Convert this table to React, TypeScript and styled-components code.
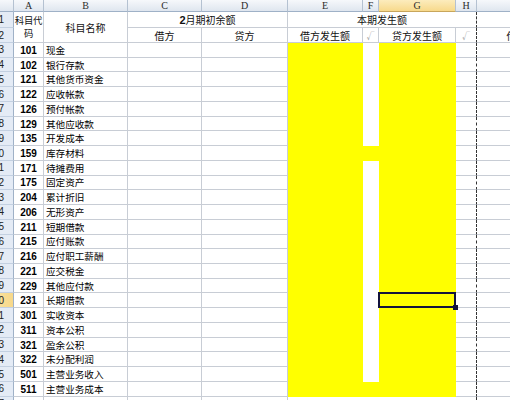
import React from "react";
import styled, { createGlobalStyle, css } from "styled-components";

const Global = createGlobalStyle`
  html, body { margin: 0; padding: 0; background: #fff; overflow: hidden; }
  body { width: 510px; height: 400px; font-family: "Liberation Sans", "Noto Sans CJK SC", sans-serif; }
  * { box-sizing: border-box; }
`;

const COLS = "28px 30px 84px 74px 86px 75px 16px 77px 21px 80px";
const GRID = "#c8cdd5";
const YELLOW = "#ffff00";
const CJK = `"Noto Sans CJK SC", "Liberation Sans", sans-serif`;

const Sheet = styled.div`
  margin-left: -14px;
  width: 524px;
  height: 400px;
  overflow: hidden;
`;

const ColHeadRow = styled.div`
  display: grid;
  grid-template-columns: ${COLS};
  height: 12px;
`;

const ColHead = styled.div<{ $active?: boolean }>`
  background: linear-gradient(#f6f8fb, #dfe6ef);
  border-right: 1px solid #b4c1d1;
  border-bottom: 1px solid #9fb1c7;
  font: 10px "Liberation Serif", serif;
  line-height: 11px;
  color: #2b2b2b;
  text-align: center;
  ${(p) =>
    p.$active &&
    css`
      background: linear-gradient(#fcecbd, #f7d98b);
      border-bottom-color: #c8a65c;
    `}
`;

const HeadGrid = styled.div`
  display: grid;
  grid-template-columns: ${COLS};
  grid-template-rows: 16px 15px;
`;

const RowHead = styled.div<{ $active?: boolean; $r?: string }>`
  ${(p) => p.$r && css`grid-column: 1; grid-row: ${p.$r};`}
  background: ${(p) => (p.$active ? "linear-gradient(90deg,#fbe6a6,#f7d88a)" : "#e4ebf5")};
  border-right: 1px solid #9fb1c7;
  border-bottom: 1px solid #c3d0e1;
  font: 10px "Liberation Sans", sans-serif;
  color: #222;
  padding-right: 9px;
  display: flex;
  align-items: center;
  justify-content: flex-end;
  overflow: hidden;
  white-space: nowrap;
`;

const HCell = styled.div<{ $c: string; $r: string; $dashed?: boolean }>`
  grid-column: ${(p) => p.$c};
  grid-row: ${(p) => p.$r};
  border-right: 1px ${(p) => (p.$dashed ? "dashed #333" : `solid ${GRID}`)};
  border-bottom: 1px solid ${GRID};
  display: flex;
  align-items: center;
  justify-content: center;
  font-family: ${CJK};
  font-size: 10px;
  line-height: 11px;
  color: #111;
  white-space: nowrap;
  overflow: hidden;
  text-align: center;
`;

const Stack = styled.span`
  display: flex;
  flex-direction: column;
  align-items: center;
  font-size: 9.4px;
  line-height: 13px;
  letter-spacing: -0.2px;
`;

const Bold2 = styled.b`
  font: bold 11px "Liberation Sans", sans-serif;
`;

const Check = styled.span`
  color: #9a9a9a;
  font-size: 8px;
`;

const DataRow = styled.div`
  display: grid;
  grid-template-columns: ${COLS};
  height: 14.74px;
`;

const Cell = styled.div<{ $dashed?: boolean }>`
  border-right: 1px ${(p) => (p.$dashed ? "dashed #333" : `solid ${GRID}`)};
  border-bottom: 1px solid ${GRID};
  overflow: hidden;
  white-space: nowrap;
`;

const Code = styled(Cell)`
  font: bold 10px "Liberation Sans", sans-serif;
  color: #000;
  display: flex;
  align-items: center;
  justify-content: center;
  padding-top: 1px;
`;

const Name = styled(Cell)`
  font-family: ${CJK};
  font-size: 9.6px;
  color: #000;
  display: flex;
  align-items: center;
  padding-left: 2px;
`;

const Fill = styled.div<{ $color: string; $selected?: boolean }>`
  background: ${(p) => p.$color};
  position: relative;
  ${(p) =>
    p.$selected &&
    css`
      &::after {
        content: "";
        position: absolute;
        left: -1px;
        top: -1px;
        right: 0;
        bottom: 0;
        border: 2px solid #14143c;
      }
      &::before {
        content: "";
        position: absolute;
        right: -2px;
        bottom: -2px;
        width: 5px;
        height: 5px;
        background: #14143c;
        z-index: 2;
      }
    `}
`;

const rows: [number, string, string][] = [
  [3, "101", "现金"],
  [4, "102", "银行存款"],
  [5, "121", "其他货币资金"],
  [6, "122", "应收帐款"],
  [7, "126", "预付帐款"],
  [8, "129", "其他应收款"],
  [9, "135", "开发成本"],
  [10, "159", "库存材料"],
  [11, "171", "待摊费用"],
  [12, "175", "固定资产"],
  [13, "204", "累计折旧"],
  [14, "206", "无形资产"],
  [15, "211", "短期借款"],
  [16, "215", "应付账款"],
  [17, "216", "应付职工薪酬"],
  [18, "221", "应交税金"],
  [19, "229", "其他应付款"],
  [20, "231", "长期借款"],
  [21, "301", "实收资本"],
  [22, "311", "资本公积"],
  [23, "321", "盈余公积"],
  [24, "322", "未分配利润"],
  [25, "501", "主营业务收入"],
  [26, "511", "主营业务成本"],
  [27, "", ""],
];

const letters = ["", "A", "B", "C", "D", "E", "F", "G", "H", ""];
const ACTIVE_ROW = 20;

export default function App() {
  return (
    <>
      <Global />
      <Sheet>
        <ColHeadRow>
          {letters.map((l, i) => (
            <ColHead key={i} $active={l === "G"}>
              {l}
            </ColHead>
          ))}
        </ColHeadRow>
        <HeadGrid>
          <RowHead $r="1">1</RowHead>
          <RowHead $r="2">2</RowHead>
          <HCell $c="2" $r="1 / 3">
            <Stack>
              <span>科目代</span>
              <span>码</span>
            </Stack>
          </HCell>
          <HCell $c="3" $r="1 / 3">科目名称</HCell>
          <HCell $c="4 / 6" $r="1">
            <Bold2>2</Bold2>月期初余额
          </HCell>
          <HCell $c="4" $r="2">借方</HCell>
          <HCell $c="5" $r="2">贷方</HCell>
          <HCell $c="6 / 10" $r="1" $dashed>
            本期发生额
          </HCell>
          <HCell $c="6" $r="2">借方发生额</HCell>
          <HCell $c="7" $r="2">
            <Check>√</Check>
          </HCell>
          <HCell $c="8" $r="2">贷方发生额</HCell>
          <HCell $c="9" $r="2" $dashed>
            <Check>√</Check>
          </HCell>
          <HCell $c="10" $r="1"></HCell>
          <HCell $c="10" $r="2">借方</HCell>
        </HeadGrid>
        {rows.map(([n, code, name]) => (
          <DataRow key={n}>
            <RowHead $active={n === ACTIVE_ROW}>{n}</RowHead>
            <Code>{code}</Code>
            <Name>{name}</Name>
            <Cell />
            <Cell />
            <Fill $color={n <= 26 ? YELLOW : "#fff"} />
            <Fill $color={n === 10 || n === 26 ? YELLOW : "#fff"} />
            <Fill $color={n <= 26 ? YELLOW : "#fff"} $selected={n === ACTIVE_ROW} />
            <Cell $dashed />
            <Cell />
          </DataRow>
        ))}
      </Sheet>
    </>
  );
}
